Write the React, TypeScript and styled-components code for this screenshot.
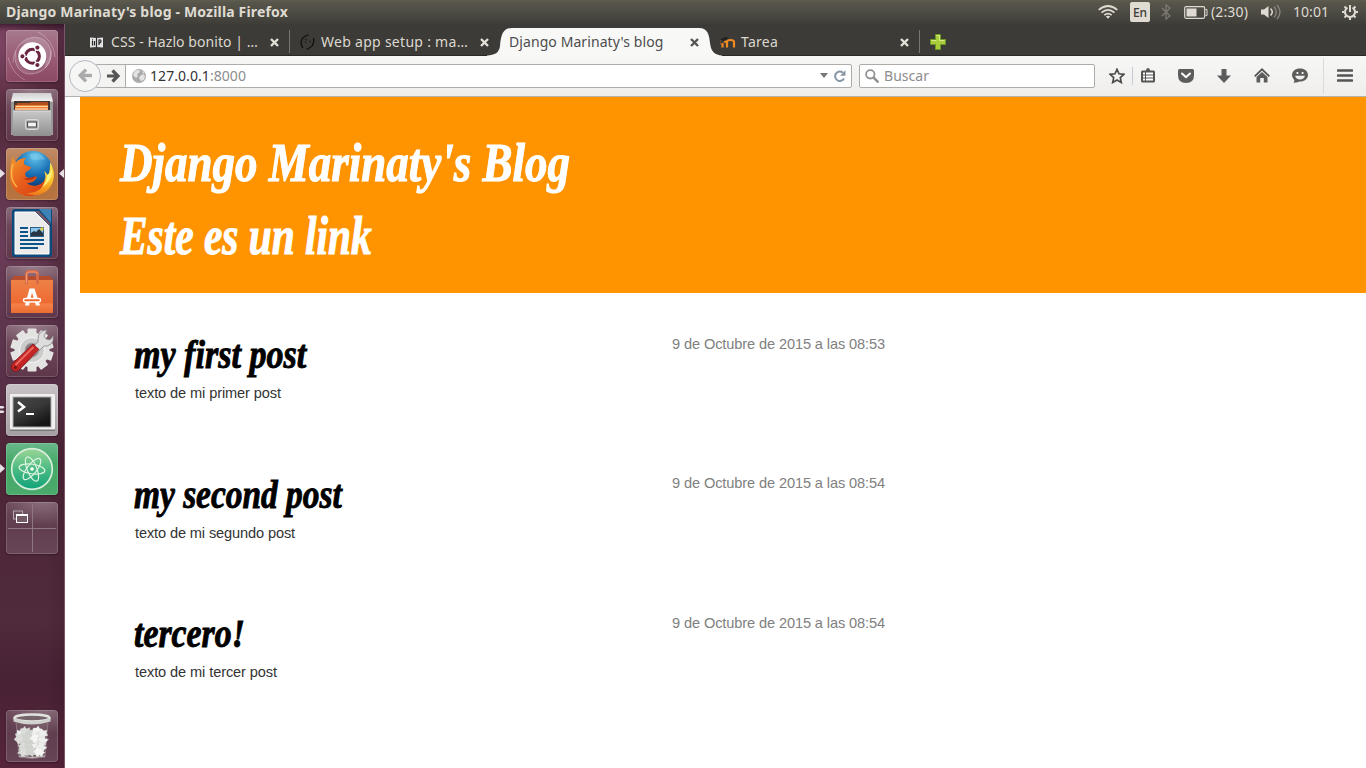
import React, { useLayoutEffect, useRef, useState } from 'react';
import styled, { createGlobalStyle, css } from 'styled-components';

const Global = createGlobalStyle`
  * { box-sizing: border-box; }
  html, body { margin: 0; padding: 0; background: #fff; }
  svg { display: block; flex: none; }
`;

const UI_FONT = '"Noto Sans", "Open Sans", sans-serif';

/* ---------- text that fills a set width ---------- */

const Spaced = styled.span`
  display: inline-block;
  white-space: pre;
`;

const Squeezed = styled.span`
  display: inline-block;
  white-space: pre;
  transform-origin: 0 50%;
`;

function Tracked({ width, children }: { width: number; children: React.ReactNode }) {
  const ref = useRef<HTMLSpanElement>(null);
  const [spacing, setSpacing] = useState(0);
  useLayoutEffect(() => {
    const el = ref.current;
    if (!el) return;
    const count = (el.textContent || '').length;
    setSpacing((width - el.getBoundingClientRect().width) / count);
  }, [width]);
  return <Spaced ref={ref} style={{ letterSpacing: spacing }}>{children}</Spaced>;
}

function Condensed({ width, children }: { width: number; children: React.ReactNode }) {
  const ref = useRef<HTMLSpanElement>(null);
  const [scale, setScale] = useState(1);
  useLayoutEffect(() => {
    const el = ref.current;
    if (el) setScale(width / el.offsetWidth);
  }, [width]);
  return <Squeezed ref={ref} style={{ transform: `scaleX(${scale})` }}>{children}</Squeezed>;
}

/* ---------- desktop ---------- */

const Desktop = styled.div`
  width: 1366px;
  height: 768px;
  display: flex;
  flex-direction: column;
  overflow: hidden;
  font-family: ${UI_FONT};
`;

const Panel = styled.header`
  height: 24px;
  flex: none;
  display: flex;
  align-items: center;
  padding: 0 8px 0 6px;
  background: linear-gradient(#5f5c4f 0, #59574c 2px, #3e3d38 24px);
  color: #dfdbd2;
  font-size: 14px;
  line-height: 24px;
`;

const WindowTitle = styled.div`
  flex: 1;
  font-weight: 700;
  font-size: 14px;
`;

const Indicator = styled.div<{ $gap: number; $width: number }>`
  margin-left: ${(p) => p.$gap}px;
  width: ${(p) => p.$width}px;
  flex: none;
  white-space: nowrap;
`;

const Keyboard = styled.div`
  margin-left: 12px;
  width: 20px;
  height: 20px;
  border-radius: 2px;
  background: #dfdbd2;
  color: #3c3b37;
  font-size: 12px;
  font-weight: 500;
  line-height: 21px;
  text-align: center;
`;

const Body = styled.div`
  flex: 1;
  display: flex;
  min-height: 0;
`;

/* ---------- launcher ---------- */

const Launcher = styled.nav`
  width: 65px;
  flex: none;
  display: flex;
  flex-direction: column;
  gap: 7px;
  padding: 6px 0 6px 6px;
  border-right: 1px solid #7b5769;
  background:
    linear-gradient(90deg, rgba(30, 0, 15, 0) 70%, rgba(30, 0, 15, 0.12)),
    linear-gradient(rgba(25, 0, 15, 0.5), rgba(25, 0, 15, 0) 7px),
    radial-gradient(ellipse 50px 70px at 0 20px, #7c4562, rgba(124, 69, 98, 0)),
    radial-gradient(ellipse 60px 110px at 0 220px, #6b3c58, rgba(107, 60, 88, 0)),
    linear-gradient(#5c3049 0, #542a3c 10%, #593044 25%, #5b344c 45%, #4c2537 58%, #502b3c 80%, #482235 88%, #56243b 100%);
`;

const tileTone = {
  glass: 'radial-gradient(ellipse 40px 22px at 50% 0, rgba(255,255,255,.22), rgba(255,255,255,0)), linear-gradient(#7b5a6a, #6c4658 40%, #5f374b)',
  ubuntu: 'linear-gradient(#a77a8e, #995a74 55%, #8c4964)',
  fox: 'linear-gradient(#c18c68, #b1713f 55%, #b7743f)',
  terminal: 'linear-gradient(#c8c2c6, #a49ea2)',
  atom: 'linear-gradient(#69b888, #43a967 40%, #4baa6c)',
  dim: 'radial-gradient(ellipse 40px 24px at 70% 0, rgba(255,255,255,.2), rgba(255,255,255,0)), linear-gradient(#6b4859, #613e4f 45%, #674556)',
};

const Tile = styled.div<{ $tone: keyof typeof tileTone; $last?: boolean }>`
  position: relative;
  width: 52px;
  height: 52px;
  flex: none;
  border-radius: 4px;
  background: ${(p) => tileTone[p.$tone]};
  box-shadow: inset 0 0 0 1px rgba(255, 255, 255, 0.16), 0 1px 2px rgba(20, 0, 10, 0.35);
  ${(p) => p.$last && css`margin-top: auto;`}
`;

const Pip = styled.svg<{ $right?: boolean }>`
  position: absolute;
  top: 20px;
  ${(p) => (p.$right ? 'right: -6px;' : 'left: -6px;')}
`;

const RunningPip = () => (
  <Pip width="5" height="10" viewBox="0 0 5 10"><path d="M0 1 5 5.500 0 10z" fill="#e6e1e4" /></Pip>
);

const UbuntuIcon = () => (
  <svg width="52" height="52" viewBox="0 0 52 52">
    <path d="M7 33C8 12 25 2 38 10c10 7 8 22 1 28 2-17-8-27-22-24C10 16 8 24 7 33z" fill="#fff" opacity=".17" />
    <path d="M45 20c2 14-9 25-23 24C11 42 7 31 10 21c1 12 8 19 17 19 9 0 16-9 18-20z" fill="#fff" opacity=".13" />
    <g fill="none" stroke="#fff" strokeOpacity=".28" strokeWidth="1">
      <path d="M7 33C8 12 25 2 38 10c10 7 8 22 1 28" />
      <path d="M45 20c2 14-9 25-23 24C11 42 7 31 10 21" />
      <path d="M2 27c3 12 9 19 17 23M32 2c10 5 16 14 17 25" />
    </g>
    <circle cx="26.300" cy="27.200" r="14.200" fill="#5d2940" opacity=".4" />
    <circle cx="26.300" cy="26.300" r="14" fill="#fff" />
    <circle cx="26.400" cy="26.300" r="7" fill="none" stroke="#692541" strokeWidth="3" />
    <g stroke="#fff" strokeWidth="1.200">
      <path d="M17 26.300h5M29 21.600l3-5M29 31l3 5" />
      <g fill="#692541"><circle cx="16.400" cy="26.300" r="2.700" /><circle cx="31.400" cy="17.600" r="2.700" /><circle cx="31.400" cy="35" r="2.700" /></g>
    </g>
  </svg>
);

const FilesIcon = () => (
  <svg width="52" height="52" viewBox="0 0 52 52">
    <defs>
      <linearGradient id="cab" x2="0" y2="1"><stop stopColor="#c9c9c9" /><stop offset="1" stopColor="#8f8f8f" /></linearGradient>
      <linearGradient id="lid" x2="0" y2="1"><stop stopColor="#cfcfcf" /><stop offset="1" stopColor="#f3f3f3" /></linearGradient>
    </defs>
    <path d="M5 12h42v34H5z" fill="#999" />
    <path d="M7 4h38l2 8.500H5z" fill="url(#lid)" />
    <path d="M8 12h36v11H8z" fill="#473733" />
    <path d="M11 14h13l1-1h17v4H11z" fill="#b04f20" />
    <path d="M9 16h33v5H9z" fill="#eb7a2f" />
    <path d="M10 17.500h32" stroke="#ffd69a" strokeWidth="1.200" />
    <path d="M9 20h33" stroke="#fff3dc" />
    <rect x="7" y="21.500" width="38" height="25.500" rx="1" fill="url(#cab)" />
    <path d="M7.500 22h37" stroke="#ddd" />
    <rect x="19.500" y="30.500" width="13" height="10" rx="2" fill="#b9b9b9" stroke="#d9d9d9" />
    <rect x="21.500" y="33" width="9" height="5" fill="#f5f5f5" stroke="#505050" strokeWidth="1.200" />
  </svg>
);

const FirefoxIcon = () => (
  <svg width="52" height="52" viewBox="0 0 52 52">
    <defs>
      <radialGradient id="sky" cx=".55" cy=".15" r=".8"><stop stopColor="#62c4ec" /><stop offset=".55" stopColor="#1a70b5" /><stop offset="1" stopColor="#0d3a74" /></radialGradient>
      <linearGradient id="fur" x2=".9" y2="1"><stop stopColor="#f49b2c" /><stop offset=".5" stopColor="#e8601c" /><stop offset="1" stopColor="#d53b12" /></linearGradient>
      <linearGradient id="tail" x2="0" y2="1"><stop stopColor="#fbe84c" /><stop offset=".6" stopColor="#fbc02c" /><stop offset="1" stopColor="#ef7a1a" /></linearGradient>
    </defs>
    <circle cx="27" cy="22.500" r="19.500" fill="url(#sky)" />
    <path d="M24 6c7-3 14 1 15 6-4-2-8 1-12 0-2-1-4-3-3-6z" fill="#8bd3ef" opacity=".45" />
    <path d="M7 8c0 3 1 5 3 6 3-3 6-4 10-4-2 2-3 5-1 7l6 2c0 2-3 4-5 5-2 3 0 6 4 6 3 0 4-2 7-1-2 5-7 6-10 6 5 5 15 3 18-4 1 8-4 16-13 17C12 49 3 39 4 27c0-8 1-14 3-19z" fill="url(#fur)" />
    <path d="M44 14c6 10 5 20-2 28-7 6-15 6-22 3 11 1 18-5 19-14 1-3 0-6-1-8 2 1 3 3 4 5 2-5 2-9 2-14z" fill="url(#tail)" />
    <path d="M46 21c1 8-4 15-10 18 4-5 5-8 5-12 2-1 4-3 5-6z" fill="#fff27b" />
    <path d="M7 16c-3 8-2 17 4 23" fill="none" stroke="#f7b649" strokeWidth="1.500" />
    <path d="M17 29c4 3 8 0 13-1-2 4-6 4-10 4z" fill="#b8340f" />
  </svg>
);

const WriterIcon = () => (
  <svg width="52" height="52" viewBox="0 0 52 52">
    <path d="M9 2h36q1 0 1 2v43q0 3-3 3H9q-3 0-3-3V5q0-3 3-3z" fill="#0c4a7b" />
    <path d="M33 2h12v14z" fill="#3e83b4" />
    <path d="M9 5h20l14 14v28H9z" fill="#ecebec" stroke="#fff" />
    <path d="m29 4 15 15V16L33 4z" fill="#795668" />
    <g stroke="#0a568b" strokeWidth="2"><path d="M14 21h8M14 25h8M14 29h8M14 33h24M14 37h24M14 41h18" /></g>
    <rect x="24.500" y="20.500" width="13" height="9" fill="#8dc6e8" stroke="#29628b" />
    <path d="m25 29v-3l3-2 2 1 3-3 3 3 1 1v3z" fill="#263743" /><circle cx="36" cy="22" r="1.700" fill="#e8cd3e" />
  </svg>
);

const SoftwareIcon = () => (
  <svg width="52" height="52" viewBox="0 0 52 52">
    <defs><linearGradient id="bag" x2="0" y2="1"><stop stopColor="#ee8147" /><stop offset=".7" stopColor="#ed6b32" /><stop offset=".72" stopColor="#f58148" /><stop offset="1" stopColor="#ea6d32" /></linearGradient></defs>
    <path d="M5 14 8 10h36l3 4z" fill="#b44c2d" />
    <path d="M5 14h42v33H5z" fill="url(#bag)" />
    <path d="M20.500 18V8q0-2.500 3-2.500h5q3 0 3 2.500v10" fill="none" stroke="#d66b48" strokeWidth="3" />
    <path d="M20.500 17V8q0-2 3-2h5q3 0 3 2" fill="none" stroke="#ef9a79" />
    <path d="m19 39.500 4.500-17h5l5.500 17h-4L26 26.500l-3 13z" fill="#fff" />
    <rect x="17.500" y="32.500" width="17" height="3.500" rx="1.700" fill="#ef6a2d" stroke="#fff" strokeWidth="1.500" />
  </svg>
);

const SettingsIcon = () => (
  <svg width="52" height="52" viewBox="0 0 52 52">
    <g fill="#e3e3e2">
      {[0, 36, 72, 108, 144].map((a) => (
        <rect key={a} x="21.500" y="3.500" width="9" height="43" rx="1" transform={`rotate(${a} 26 25)`} />
      ))}
      <circle cx="26" cy="25" r="17.500" />
    </g>
    <circle cx="26" cy="25" r="12.500" fill="#ccc" stroke="#f6f6f6" />
    <circle cx="26" cy="25" r="7" fill="#8d7881" stroke="#aaa" />
    <path d="m32 14 1-5q3-4 8-4l-3 6 2 3 4 1 3-4q1 5-2 8-4 3-7 2L17 41l-5-5 20-19z" fill="#ddd" stroke="#888" strokeWidth=".8" />
    <path d="m27 19 6 5.500-20 20.500q-3.500 3-6.500 0t0-6.500z" fill="#c42424" stroke="#7c1618" strokeWidth=".8" />
    <path d="M27.500 22 9.500 40" stroke="#ed6761" strokeWidth="2" /><circle cx="9.500" cy="42.500" r="1.500" fill="#701515" />
  </svg>
);

const TerminalIcon = () => (
  <svg width="52" height="52" viewBox="0 0 52 52">
    <defs><linearGradient id="crt" x2=".6" y2="1"><stop stopColor="#474747" /><stop offset=".5" stopColor="#393939" /><stop offset="1" stopColor="#161616" /></linearGradient></defs>
    <rect x="4" y="10" width="45" height="37" rx="1.500" fill="#777" />
    <rect x="4" y="10" width="45" height="35.500" rx="1" fill="#f0f0f0" />
    <rect x="6.500" y="12.500" width="39" height="31" fill="#aaa" />
    <rect x="7.500" y="13.500" width="37" height="29" fill="url(#crt)" />
    <path d="m12 18 6 5-6 4.500" fill="none" stroke="#fff" strokeWidth="2.500" /><path d="M20 30h8" stroke="#fff" strokeWidth="2" />
  </svg>
);

const AtomIcon = () => (
  <svg width="52" height="52" viewBox="0 0 52 52">
    <defs><linearGradient id="green" x2="0" y2="1"><stop stopColor="#9bd695" /><stop offset=".5" stopColor="#4bbb83" /><stop offset="1" stopColor="#10a27a" /></linearGradient></defs>
    <circle cx="26" cy="26" r="20.300" fill="url(#green)" stroke="#d7eedb" strokeWidth="1.700" />
    <g fill="none" stroke="#def3e2" strokeWidth="1.200">
      <ellipse cx="26" cy="26" rx="13" ry="4.800" transform="rotate(8 26 26)" />
      <ellipse cx="26" cy="26" rx="13" ry="4.800" transform="rotate(68 26 26)" />
      <ellipse cx="26" cy="26" rx="13" ry="4.800" transform="rotate(128 26 26)" />
    </g>
    <circle cx="26" cy="26" r="1.800" fill="#fff" />
  </svg>
);

const WorkspaceIcon = () => (
  <svg width="52" height="52" viewBox="0 0 52 52">
    <path d="M26.500 2v48M2 26.500h48" stroke="#8f7683" />
    <rect x="7.500" y="9" width="9" height="8" fill="#69505d" stroke="#b5a7ae" />
    <rect x="10.500" y="12.500" width="11" height="8" fill="#715966" stroke="#fff" /><path d="M10 13h12" stroke="#fff" strokeWidth="2" />
  </svg>
);

const lumps = [[15, 23], [20, 21], [26, 24], [32, 22], [37, 25], [14, 30], [21, 29], [28, 29], [35, 31], [17, 36], [24, 35], [31, 37], [36, 37], [19, 42], [26, 42], [33, 43]];

const TrashIcon = () => (
  <svg width="52" height="52" viewBox="0 0 52 52">
    <path d="M10 11h32l-3 36q-13 3-26 0z" fill="#b6a9ad" fillOpacity=".12" stroke="#927f89" strokeWidth=".8" />
    <path d="m13 21 5-2 7 3 7-3 6 4-1 22H15z" fill="#cfd0cc" />
    {lumps.map(([x, y], i) => (
      <path key={i} transform={`translate(${x} ${y}) rotate(${i * 37})`} d="m-4-3 3 1 2-3 2 3 3 2-2 3 1 3-4-1-3 1-1-3-3-1 2-2z" fill={['#eee', '#dcddda', '#d2d4d0', '#f5f5f4'][i % 4]} stroke="#c3c6c0" strokeWidth=".3" />
    ))}
    <path d="M13 46q13 3 26 0" fill="none" stroke="#c7c9c2" />
    <ellipse cx="26" cy="8" rx="17.500" ry="3.500" fill="#75636b" stroke="#e2e3df" strokeWidth="2.500" />
    <path d="M7.500 8v3.500q18 6 37 0V8q-18 7-37 0z" fill="#cfd1cc" />
  </svg>
);

/* ---------- browser ---------- */

const Browser = styled.main`
  flex: 1;
  min-width: 0;
  display: flex;
  flex-direction: column;
`;

const TabStrip = styled.div`
  height: 32px;
  flex: none;
  display: flex;
  align-items: stretch;
  background: linear-gradient(#3c3b37 31px, #2a2927 31px);
`;

const Tab = styled.div<{ $width: number; $pad: number; $overlap?: number; $divided?: boolean; $active?: boolean }>`
  position: relative;
  width: ${(p) => p.$width}px;
  padding-left: ${(p) => p.$pad}px;
  margin-left: ${(p) => -(p.$overlap || 0)}px;
  flex: none;
  display: flex;
  align-items: center;
  padding-top: 4px;
  font-size: 14px;
  line-height: 28px;
  color: ${(p) => (p.$active ? '#4c4c4c' : '#dcd8cf')};
  ${(p) => p.$divided && css`
    background: linear-gradient(#777670, #777670) right 0 top 6px / 1px 23px no-repeat;
  `}
`;

const TabShape = styled.svg`
  position: absolute;
  left: 0;
  top: 4px;
`;

const TabLabel = styled.div<{ $gap: number; $width: number }>`
  position: relative;
  margin-left: ${(p) => p.$gap}px;
  width: ${(p) => p.$width}px;
  white-space: nowrap;
`;

const CloseMark = styled.svg`
  position: relative;
`;

const CloseIcon = ({ color }: { color: string }) => (
  <CloseMark width="9" height="9" viewBox="0 0 9 9"><path d="m1 1 7 7M8 1 1 8" stroke={color} strokeWidth="2.400" /></CloseMark>
);

const Toolbar = styled.div`
  height: 41px;
  flex: none;
  display: flex;
  align-items: center;
  padding: 0 0 1px 4px;
  background: linear-gradient(#f7f7f6, #efeeed);
  border-bottom: 1px solid #b4b2ae;
  color: #8d8d8d;
  font-size: 14px;
`;

const BackButton = styled.div`
  position: relative;
  z-index: 1;
  width: 32px;
  height: 32px;
  flex: none;
  display: flex;
  align-items: center;
  justify-content: center;
  border: 1px solid #b3b9c1;
  border-radius: 50%;
  background: #f6f6f5;
`;

const AddressBar = styled.div`
  width: 756px;
  height: 24px;
  margin-left: -5px;
  flex: none;
  display: flex;
  align-items: center;
  border: 1px solid #aeaca8;
  border-radius: 0 2px 2px 0;
  background: #fff;
  line-height: 22px;
`;

const ForwardButton = styled.div`
  width: 29px;
  height: 22px;
  padding-left: 9px;
  display: flex;
  align-items: center;
  border-right: 1px solid #aeaca8;
  background: #f3f3f2;
`;

const GlobeMark = styled.svg`
  margin-left: 6px;
`;

const ReloadMark = styled.svg`
  margin: 0 5px 0 6px;
`;

const Address = styled.div`
  flex: 1;
  margin-left: 4px;
  white-space: nowrap;
`;

const Host = styled.span`
  color: #333;
`;

const SearchBox = styled.div`
  width: 236px;
  height: 24px;
  margin-left: 7px;
  padding-left: 5px;
  flex: none;
  display: flex;
  align-items: center;
  gap: 5px;
  border: 1px solid #aeaca8;
  border-radius: 2px;
  background: #fff;
  line-height: 22px;
`;

const ToolButton = styled.div<{ $width: number; $gap?: number }>`
  width: ${(p) => p.$width}px;
  margin-left: ${(p) => p.$gap || 0}px;
  flex: none;
  display: flex;
  justify-content: center;
`;

const Divider = styled.div<{ $height: number; $gap: number; $color: string }>`
  width: 1px;
  height: ${(p) => p.$height}px;
  margin-left: ${(p) => p.$gap}px;
  flex: none;
  background: ${(p) => p.$color};
`;

const ArrowIcon = ({ back, color, size }: { back?: boolean; color: string; size: number }) => (
  <svg width={size} height={size} viewBox="0 0 14 14">
    <path transform={back ? 'matrix(-1 0 0 1 14 0)' : undefined} d="M1 7h10M6.500 1.500 12 7l-5.500 5.500" fill="none" stroke={color} strokeWidth="3.200" />
  </svg>
);

/* ---------- blog page ---------- */

const Page = styled.div`
  flex: 1;
  background: #fff;
  padding-left: 15px;
`;

const scriptType = css`
  font-family: "Liberation Serif", serif;
  font-style: italic;
  font-weight: 700;
  white-space: nowrap;
`;

const PageHeader = styled.div`
  height: 196px;
  padding: 29px 0 0 40px;
  background: #ff9400;
`;

const PageTitle = styled.h1`
  ${scriptType}
  margin: 0;
  height: 73px;
  color: #fff;
  font-size: 55px;
  line-height: 74px;
  -webkit-text-stroke: 1.1px #fff;
`;

const Posts = styled.div`
  display: flex;
  flex-direction: column;
  padding: 39px 0 0 55px;
  font: 14.6px/20px "Liberation Sans", sans-serif;
`;

const Post = styled.article`
  display: flex;
  height: 139.5px;
`;

const PostMain = styled.div`
  width: 537px;
  color: #333;
`;

const PostTitle = styled.h2`
  ${scriptType}
  margin: 0 0 0 -1px;
  height: 51px;
  color: #000;
  font-size: 39px;
  line-height: 46px;
  -webkit-text-stroke: 0.9px #000;
`;

const PostDate = styled.div`
  margin-top: 1.6px;
  color: #808080;
`;

const posts = [
  { title: 'my first post', width: 172, text: 'texto de mi primer post', textWidth: 146, date: '9 de Octubre de 2015 a las 08:53' },
  { title: 'my second post', width: 208, text: 'texto de mi segundo post', textWidth: 160, date: '9 de Octubre de 2015 a las 08:54' },
  { title: 'tercero!', width: 111, text: 'texto de mi tercer post', textWidth: 142, date: '9 de Octubre de 2015 a las 08:54' },
];

export default function App() {
  return (
    <Desktop>
      <Global />
      <Panel>
        <WindowTitle><Tracked width={282}>Django Marinaty's blog - Mozilla Firefox</Tracked></WindowTitle>
        <svg width="20" height="14" viewBox="0 0 20 14" fill="none" stroke="#dfdbd2" strokeWidth="1.700">
          <path d="M.7 4.800Q10-2.800 19.300 4.800M3.500 7.700Q10 2.200 16.500 7.700M6.300 10.200Q10 7.200 13.700 10.200" /><path d="m7.800 11.500 2.200 2.300 2.200-2.300q-2.200-1.500-4.400 0z" fill="#dfdbd2" stroke="none" />
        </svg>
        <Keyboard>En</Keyboard>
        <Indicator $gap={11} $width={10}>
          <svg width="10" height="16" viewBox="0 0 10 16"><path d="m1 4 8 8-4 3V1l4 3-8 8" fill="none" stroke="#7c7a73" strokeWidth="1.300" /></svg>
        </Indicator>
        <Indicator $gap={13} $width={24}>
          <svg width="24" height="13" viewBox="0 0 24 13"><rect x=".7" y=".7" width="20" height="11.600" rx="1.500" fill="none" stroke="#dfdbd2" strokeWidth="1.200" /><path d="M2.500 2.500h10v8h-10z" fill="#dfdbd2" /><path d="M21.500 3.500h1.500v6h-1.500" fill="none" stroke="#dfdbd2" /></svg>
        </Indicator>
        <Indicator $gap={3} $width={37}><Tracked width={37}>(2:30)</Tracked></Indicator>
        <Indicator $gap={13} $width={20}>
          <svg width="20" height="16" viewBox="0 0 20 16"><path d="M0 5.500h3L7.500 2v12L3 10.500H0z" fill="#dfdbd2" /><path d="M9.500 4.500q3.500 3.500 0 7" fill="none" stroke="#dfdbd2" strokeWidth="1.500" /><path d="M13 2.500q4.500 5.500 0 11M16 1q6 7 0 14" fill="none" stroke="#85837b" strokeWidth="1.400" /></svg>
        </Indicator>
        <Indicator $gap={12} $width={36}><Tracked width={36}>10:01</Tracked></Indicator>
        <Indicator $gap={13} $width={16}>
          <svg width="16" height="16" viewBox="0 0 16 16" fill="none" stroke="#dfdbd2">
            <path d="M5.500 3.700a5 5 0 1 0 5 0" strokeWidth="2" /><path d="M8 1v7" strokeWidth="2" />
            <path d="M2.500 2.500 4 4M12 4l1.500-1.500M0 8h2.500M13.500 8H16M2.500 13.500 4 12M12 12l1.500 1.500M8 13.500V16" strokeWidth="2" />
          </svg>
        </Indicator>
      </Panel>
      <Body>
        <Launcher>
          <Tile $tone="ubuntu"><UbuntuIcon /></Tile>
          <Tile $tone="glass"><FilesIcon /></Tile>
          <Tile $tone="fox">
            <FirefoxIcon />
            <RunningPip />
            <Pip $right width="6" height="10" viewBox="0 0 6 10"><path d="M6 1 1 5.500 6 10z" fill="#e6e1e4" /></Pip>
          </Tile>
          <Tile $tone="glass"><WriterIcon /></Tile>
          <Tile $tone="glass"><SoftwareIcon /></Tile>
          <Tile $tone="glass"><SettingsIcon /></Tile>
          <Tile $tone="terminal">
            <TerminalIcon />
            <Pip width="5" height="10" viewBox="0 0 5 10"><path d="M0 2h3l1.500 1.200L3 4.500H0zM0 6.500h3l1.500 1.200L3 9H0z" fill="#e6e1e4" /></Pip>
          </Tile>
          <Tile $tone="atom"><AtomIcon /><RunningPip /></Tile>
          <Tile $tone="dim"><WorkspaceIcon /></Tile>
          <Tile $tone="dim" $last><TrashIcon /></Tile>
        </Launcher>
        <Browser>
          <TabStrip>
            <Tab $width={225} $pad={24} $divided>
              <svg width="15" height="13" viewBox="0 0 15 13"><path d="m1 1.500 6.500.5 6.500-.5v10l-6.500-.5-6.500.5z" fill="#e4e4e4" /><path d="M7.500 2v9M3.500 5v4.500M5.500 5v4.500M3 3.800h1M10 9V4q1.800-.5 2 1t-2 2.500" fill="none" stroke="#292929" strokeWidth="1.200" /></svg>
              <TabLabel $gap={7} $width={159}><Tracked width={147}>CSS - Hazlo bonito | …</Tracked></TabLabel>
              <CloseIcon color="#e4e0d8" />
            </Tab>
            <Tab $width={206} $pad={10}>
              <svg width="15" height="16" viewBox="0 0 15 16" fill="none" stroke="#111" strokeWidth="1.300"><path d="M8.500.8Q1.500 2.500 1 8.500q0 3 2 5.500M13.500 4q1.500 9-7 11.300" /><path d="M5.500 5.500h1M9.500 7.500h1M5 8.500h1" strokeWidth="1.600" /></svg>
              <TabLabel $gap={6} $width={159}><Tracked width={147}>Web app setup : ma…</Tracked></TabLabel>
              <CloseIcon color="#e4e0d8" />
            </Tab>
            <Tab $width={235} $pad={22} $overlap={9} $active>
              <TabShape width="235" height="28" viewBox="0 0 235 28"><path d="M0 28v-.500C8 27 12 25 13 18 14 5 17 0 25 0H212C221 0 222 7 223 15 224 24 228 27 235 27.500V28z" fill="#f8f8f7" /></TabShape>
              <TabLabel $gap={0} $width={181}><Tracked width={154.5}>Django Marinaty's blog</Tracked></TabLabel>
              <CloseIcon color="#555" />
            </Tab>
            <Tab $width={201} $pad={0} $overlap={3} $divided>
              <svg width="17" height="12" viewBox="0 0 17 12"><path d="M3.500 11.500V7M8 11.500V6q0-2 3.500-2T15 6v5.500M5 6q3-1 3 1" fill="none" stroke="#f08a22" strokeWidth="2.200" /><path d="m1 3.500 5-2.500 4 1-5 3z" fill="#222" /><path d="M1.500 4v5" stroke="#6b4a35" /></svg>
              <TabLabel $gap={5} $width={159}><Tracked width={37}>Tarea</Tracked></TabLabel>
              <CloseIcon color="#e4e0d8" />
            </Tab>
            <Tab $width={30} $pad={10}>
              <svg width="16" height="16" viewBox="0 0 16 16"><path d="M5.500.500h5v5h5v5h-5v5h-5v-5h-5v-5h5z" fill="#aacb3a" stroke="#6d9927" /><path d="M6.500 1.500h3v5h5M1.500 6.500h5" fill="none" stroke="#dcea84" /></svg>
            </Tab>
          </TabStrip>
          <Toolbar>
            <BackButton><ArrowIcon back color="#ababab" size={15} /></BackButton>
            <AddressBar>
              <ForwardButton><ArrowIcon color="#555" size={14} /></ForwardButton>
              <GlobeMark width="14" height="14" viewBox="0 0 14 14"><circle cx="7" cy="7" r="7" fill="#aaa" /><path d="M3 1.500 8 1 7 4 5 5 6 7 4 9 1 6zM8 7l3-2 2 2-1 4-3 1-2-3zM10 1l3 3-2 .500z" fill="#f5f5f5" opacity=".75" /></GlobeMark>
              <Address><Tracked width={96}><Host>127.0.0.1</Host>:8000</Tracked></Address>
              <svg width="8" height="5" viewBox="0 0 8 5"><path d="M0 0h8L4 5z" fill="#777" /></svg>
              <ReloadMark width="12" height="12" viewBox="0 0 12 12"><path d="M10 8.500a4.700 4.700 0 1 1-1-5.700" fill="none" stroke="#8796a4" strokeWidth="2" /><path d="M11.500.300v5.400H6z" fill="#8796a4" /></ReloadMark>
            </AddressBar>
            <SearchBox>
              <svg width="14" height="14" viewBox="0 0 14 14"><circle cx="5.300" cy="5.300" r="4.200" fill="none" stroke="#929292" strokeWidth="1.800" /><path d="m8.500 8.500 5 5" stroke="#929292" strokeWidth="2.500" /></svg>
              <Tracked width={45}>Buscar</Tracked>
            </SearchBox>
            <ToolButton $width={20} $gap={12}>
              <svg width="16" height="16" viewBox="0 0 16 16"><path d="m8 1.300 2 4.500 4.900.500-3.600 3.300 1 4.900L8 12l-4.300 2.500 1-4.900L1.100 6.300 6 5.800z" fill="none" stroke="#4d4d4d" strokeWidth="1.700" /></svg>
            </ToolButton>
            <Divider $height={18} $gap={5} $color="#c5cbd3" />
            <ToolButton $width={30}>
              <svg width="14" height="15" viewBox="0 0 14 15"><path d="M1.500 2.500H5Q5 0 7 0t2 2.500h3.500q1.500 0 1.500 1.500v9q0 1.500-1.500 1.500h-11Q0 14.500 0 13V4q0-1.500 1.500-1.500z" fill="#555" /><path d="M2 5.500h2M2 8.500h2M2 11.500h2M5 5.500h7M5 8.500h7M5 11.500h7" stroke="#fff" strokeWidth="2" /></svg>
            </ToolButton>
            <ToolButton $width={38} $gap={4}>
              <svg width="16" height="14" viewBox="0 0 16 14"><path d="M1.500 0h13Q16 0 16 1.500V6q0 8-8 8T0 6V1.500Q0 0 1.500 0z" fill="#5c5c5c" /><path d="m4 4.500 4 3.700 4-3.700" fill="none" stroke="#fff" strokeWidth="2" strokeLinecap="round" /></svg>
            </ToolButton>
            <ToolButton $width={38}>
              <svg width="14" height="14" viewBox="0 0 14 14"><path d="M4.500 0h5v6.500H14L7 14 0 6.500h4.500z" fill="#5c5c5c" /></svg>
            </ToolButton>
            <ToolButton $width={38}>
              <svg width="16" height="15" viewBox="0 0 16 15"><path d="m.7 8.300 7.300-7 7.300 7" fill="none" stroke="#555" strokeWidth="1.800" /><path d="m8 4 5.500 5v5.500H9.800V10H6.200v4.500H2.500V9z" fill="#5c5c5c" /></svg>
            </ToolButton>
            <ToolButton $width={38}>
              <svg width="16" height="15" viewBox="0 0 16 15"><path d="M8 .5c4.500 0 8 2.700 8 6.500s-3.500 6.500-8 6.500c-1.500 0-3 1.300-6.500 1.300Q3 13 2 11.500C.7 10 0 8.700 0 7 0 3.200 3.500.5 8 .5z" fill="#5c5c5c" /><circle cx="5.400" cy="5" r="1.100" fill="#fff" /><circle cx="10.600" cy="5" r="1.100" fill="#fff" /><path d="M3 7.800h10Q12 11.500 8 11.500T3 7.800z" fill="#eee" /></svg>
            </ToolButton>
            <Divider $height={36} $gap={4} $color="#dadad9" />
            <ToolButton $width={42}>
              <svg width="16" height="13" viewBox="0 0 16 13"><path d="M1 1.500h14M1 6.500h14M1 11.500h14" stroke="#555" strokeWidth="2.600" strokeLinecap="round" /></svg>
            </ToolButton>
          </Toolbar>
          <Page>
            <PageHeader>
              <PageTitle><Condensed width={450}>Django Marinaty's Blog</Condensed></PageTitle>
              <PageTitle><Condensed width={252}>Este es un link</Condensed></PageTitle>
            </PageHeader>
            <Posts>
              {posts.map((post) => (
                <Post key={post.title}>
                  <PostMain>
                    <PostTitle><Condensed width={post.width}>{post.title}</Condensed></PostTitle>
                    <Tracked width={post.textWidth}>{post.text}</Tracked>
                  </PostMain>
                  <PostDate><Tracked width={213}>{post.date}</Tracked></PostDate>
                </Post>
              ))}
            </Posts>
          </Page>
        </Browser>
      </Body>
    </Desktop>
  );
}
